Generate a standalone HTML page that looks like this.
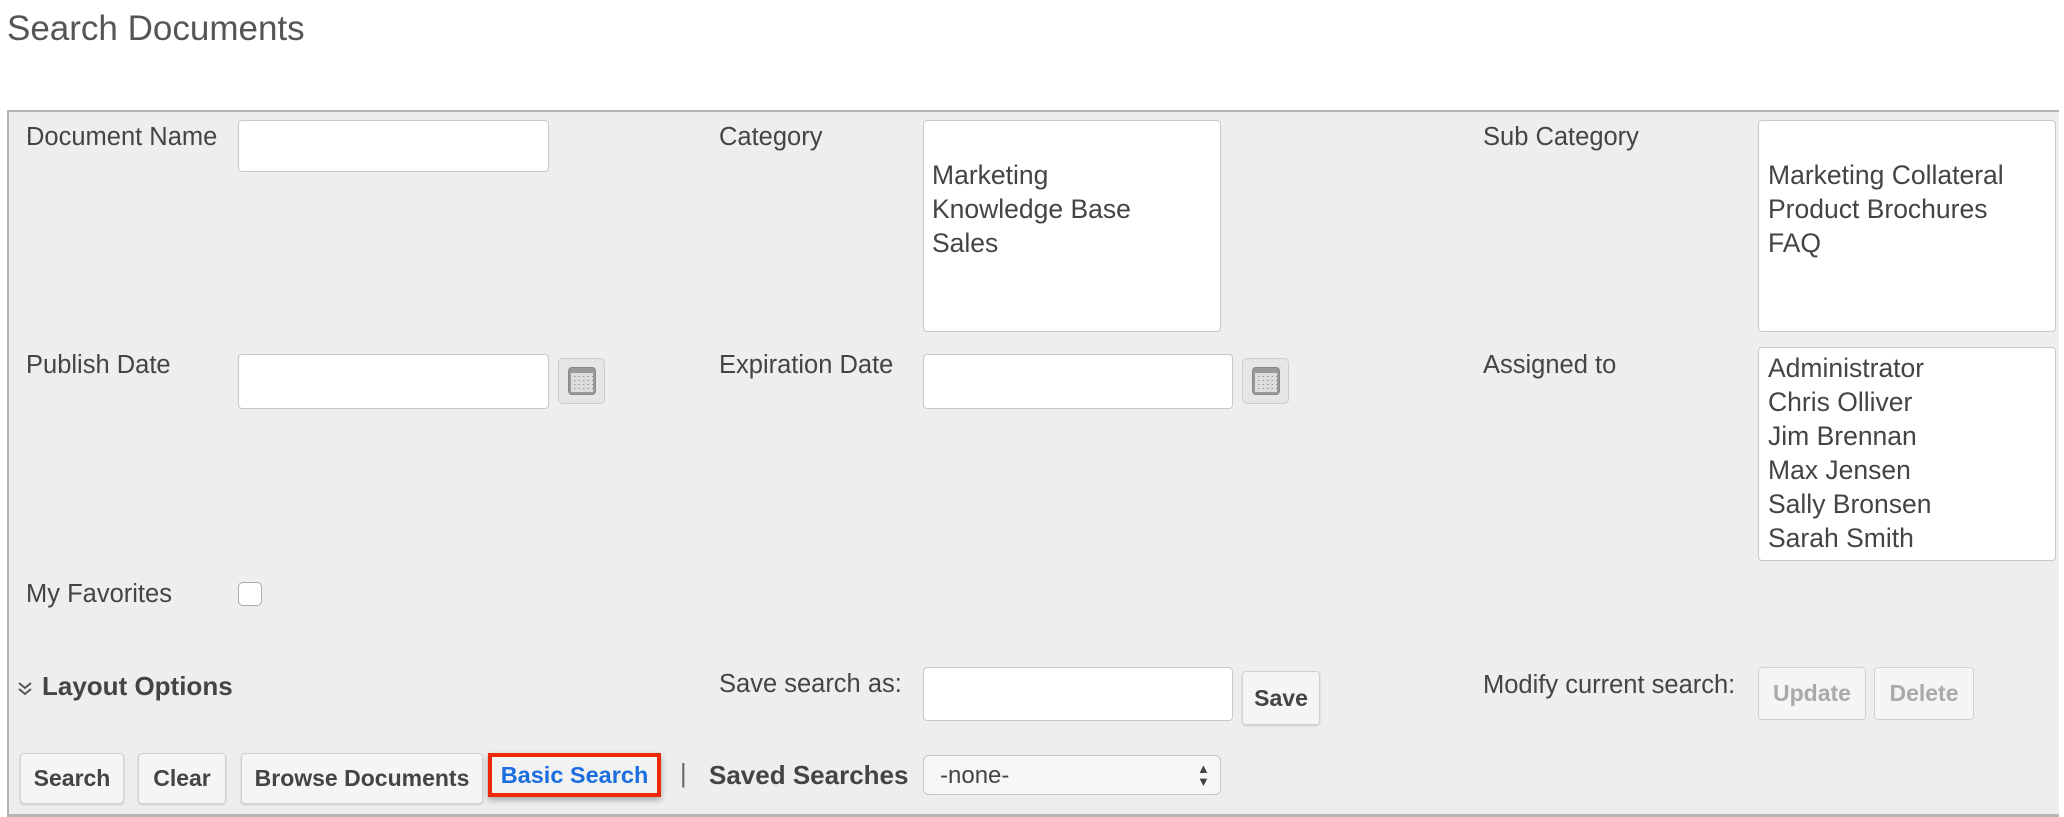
<!DOCTYPE html>
<html><head><meta charset="utf-8"><style>
body{margin:0;width:2064px;height:816px;background:#fff;font-family:"Liberation Sans",Arial,sans-serif;color:#444;position:relative;overflow:hidden}
.a{position:absolute}
.t{position:absolute;font-size:25.5px;color:#444;white-space:nowrap;line-height:1}
.inp{position:absolute;background:#fff;border:1px solid #c8c8c8;border-radius:4px;box-sizing:border-box}
.opt{position:absolute;font-size:26.5px;color:#444;line-height:34px;white-space:nowrap}
.btn{position:absolute;box-sizing:border-box;background:#f5f5f5;border:1px solid #d0d0d0;border-radius:4px;font-weight:bold;font-size:23px;color:#444;display:flex;align-items:center;justify-content:center;box-shadow:0 1px 2px rgba(0,0,0,.15)}
.cal{position:absolute;box-sizing:border-box;border:1px solid #ccc;border-radius:5px;background:#e6e6e6}
.cal i{position:absolute;left:9px;top:8px;width:28px;height:28px;border-radius:4px;background:#999;border:1px solid #888;box-sizing:border-box}
.cal b{position:absolute;left:12px;top:14px;width:22px;height:19px;background-image:repeating-linear-gradient(90deg,#ddd 0 3px,transparent 3px 4.5px),repeating-linear-gradient(0deg,#ddd 0 3px,transparent 3px 4px)}
</style></head><body>
<div class="t" style="left:7px;top:11px;font-size:35px;color:#555">Search Documents</div>
<div class="a" style="left:7px;top:110px;width:2050px;height:702px;background:#eee;border:2px solid #b5b5b5;border-right:none;border-bottom-width:3px"></div>

<div class="t" style="left:26px;top:125px">Document Name</div>
<div class="inp" style="left:238px;top:120px;width:311px;height:52px"></div>
<div class="t" style="left:719px;top:125px">Category</div>
<div class="inp" style="left:923px;top:120px;width:298px;height:212px"></div>
<div class="opt" style="left:932px;top:158px">Marketing<br>Knowledge Base<br>Sales</div>
<div class="t" style="left:1483px;top:125px">Sub Category</div>
<div class="inp" style="left:1758px;top:120px;width:298px;height:212px"></div>
<div class="opt" style="left:1768px;top:158px">Marketing Collateral<br>Product Brochures<br>FAQ</div>

<div class="t" style="left:26px;top:353px">Publish Date</div>
<div class="inp" style="left:238px;top:354px;width:311px;height:55px"></div>
<div class="cal" style="left:558px;top:358px;width:47px;height:46px"><i></i><b></b></div>
<div class="t" style="left:719px;top:353px">Expiration Date</div>
<div class="inp" style="left:923px;top:354px;width:310px;height:55px"></div>
<div class="cal" style="left:1242px;top:358px;width:47px;height:46px"><i></i><b></b></div>
<div class="t" style="left:1483px;top:353px">Assigned to</div>
<div class="inp" style="left:1758px;top:347px;width:298px;height:214px"></div>
<div class="opt" style="left:1768px;top:351px">Administrator<br>Chris Olliver<br>Jim Brennan<br>Max Jensen<br>Sally Bronsen<br>Sarah Smith</div>

<div class="t" style="left:26px;top:582px">My Favorites</div>
<div class="inp" style="left:238px;top:582px;width:24px;height:24px;border-color:#aaa;border-radius:5px"></div>

<svg class="a" style="left:17px;top:680px" width="16" height="16" viewBox="0 0 16 16"><path d="M2 3l6 5 6-5M2 9l6 5 6-5" fill="none" stroke="#555" stroke-width="2"/></svg>
<div class="t" style="left:42px;top:673px;font-size:26px;font-weight:bold;color:#444">Layout Options</div>
<div class="t" style="left:719px;top:672px">Save search as:</div>
<div class="inp" style="left:923px;top:667px;width:310px;height:54px"></div>
<div class="btn" style="left:1242px;top:671px;width:78px;height:54px">Save</div>
<div class="t" style="left:1483px;top:673px">Modify current search:</div>
<div class="btn" style="left:1758px;top:667px;width:108px;height:53px;color:#aaa;box-shadow:none">Update</div>
<div class="btn" style="left:1874px;top:667px;width:100px;height:53px;color:#aaa;box-shadow:none">Delete</div>

<div class="btn" style="left:20px;top:753px;width:104px;height:51px">Search</div>
<div class="btn" style="left:138px;top:753px;width:88px;height:51px">Clear</div>
<div class="btn" style="left:241px;top:753px;width:242px;height:51px">Browse Documents</div>
<div class="a" style="left:488px;top:753px;width:173px;height:44px;box-sizing:border-box;border:4px solid #f0280a;background:#f2f2f2;box-shadow:0 3px 6px rgba(0,0,0,.3);display:flex;align-items:center;justify-content:center;font-weight:bold;font-size:23.5px;color:#1a6ee0">Basic Search</div>
<div class="t" style="left:680px;top:762px;color:#666">|</div>
<div class="t" style="left:709px;top:762px;font-weight:bold;font-size:26px">Saved Searches</div>
<div class="inp" style="left:923px;top:755px;width:298px;height:40px;background:#f7f7f7;border-radius:6px"></div>
<div class="t" style="left:940px;top:764px;font-size:24px">-none-</div>
<div class="t" style="left:1197px;top:762px;font-size:13px;line-height:13px;color:#444">▲<br>▼</div>
</body></html>
